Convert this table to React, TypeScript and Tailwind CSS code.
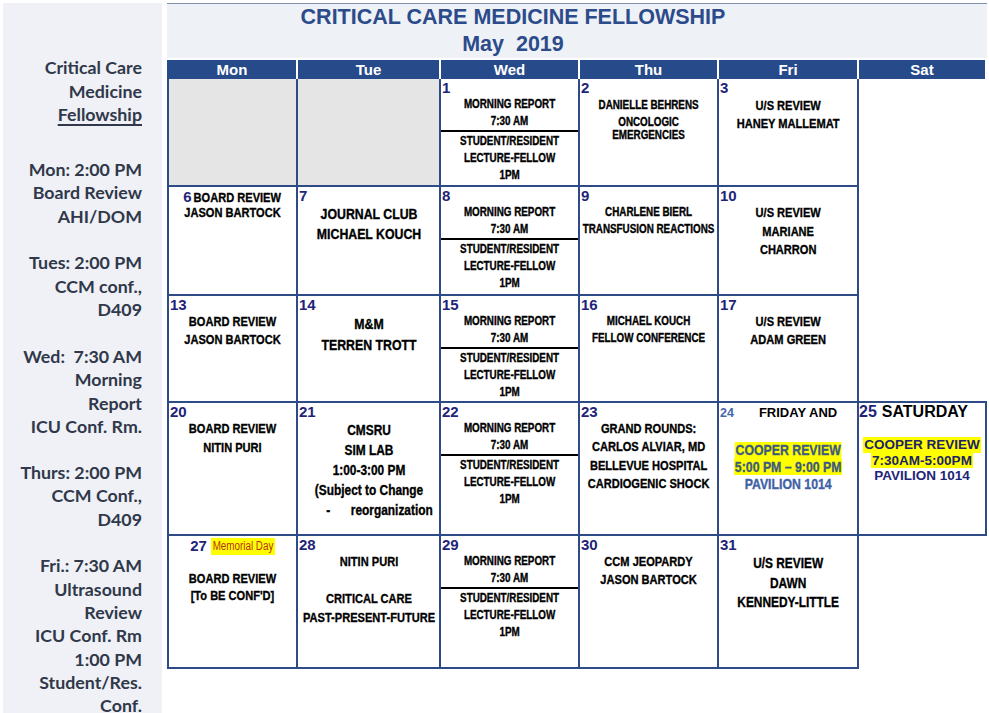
import React from "react";

const ARI = "font-['Liberation_Sans',Arial,sans-serif]";
const NAR =
  "font-['Liberation_Sans_Narrow','Arial_Narrow','Liberation_Sans',Arial,sans-serif] font-bold text-black [-webkit-text-stroke:0.35px_currentColor]";

/* Narrow block: Arial-metric bold text squeezed to Arial Narrow width */
function NB({
  className = "",
  children,
}: {
  className?: string;
  children?: React.ReactNode;
}) {
  return (
    <div
      className={`w-[122%] shrink-0 scale-x-[0.82] text-center whitespace-nowrap ${NAR} ${className}`}
    >
      {children}
    </div>
  );
}

function Num({ n }: { n: number }) {
  return (
    <div
      className={`self-stretch text-left pl-px mt-px h-[16px] leading-[16px] text-[15px] font-bold text-[#1e2478] ${ARI}`}
    >
      {n}
    </div>
  );
}

function Cell({
  children,
  cls = "border-r-2 border-b-2",
  bg = "bg-white",
}: {
  children?: React.ReactNode;
  cls?: string;
  bg?: string;
}) {
  return (
    <div
      className={`${cls} ${bg} border-[#2e4b87] flex flex-col items-center text-center overflow-hidden`}
    >
      {children}
    </div>
  );
}

function Wed({ n }: { n: number }) {
  return (
    <Cell>
      <Num n={n} />
      <NB className="text-[12px] leading-[17px]">
        MORNING REPORT
        <br />
        7:30 AM
      </NB>
      <div className="self-stretch h-[2px] bg-black" />
      <NB className="pt-px text-[12px] leading-[17px]">
        STUDENT/RESIDENT
        <br />
        LECTURE-FELLOW
        <br />
        1PM
      </NB>
    </Cell>
  );
}

const sidebar: { mt: string; lines: React.ReactNode[] }[] = [
  {
    mt: "mt-0",
    lines: [
      "Critical Care",
      "Medicine",
      <span className="underline underline-offset-[3px] decoration-[1.5px]">
        Fellowship
      </span>,
    ],
  },
  { mt: "mt-[31.7px]", lines: ["Mon: 2:00 PM", "Board Review", "AHI/DOM"] },
  { mt: "mt-[23.6px]", lines: ["Tues: 2:00 PM", "CCM conf.,", "D409"] },
  {
    mt: "mt-[23.6px]",
    lines: ["Wed:  7:30 AM", "Morning", "Report", "ICU Conf. Rm."],
  },
  { mt: "mt-[22.8px]", lines: ["Thurs: 2:00 PM", "CCM Conf.,", "D409"] },
  {
    mt: "mt-[23.6px]",
    lines: [
      "Fri.: 7:30 AM",
      "Ultrasound",
      "Review",
      "ICU Conf. Rm",
      "1:00 PM",
      "Student/Res.",
      "Conf.",
    ],
  },
];

export default function App() {
  return (
    <div className="w-[989px] h-[713px] bg-white overflow-hidden flex">
      {/* Sidebar */}
      <aside className="ml-[3px] mt-[3px] w-[159px] h-[710px] bg-[#eff1f6] pt-[53.4px] pr-[20px] text-right shrink-0">
        {sidebar.map((g, i) => (
          <div key={i} className={g.mt}>
            {g.lines.map((l, j) => (
              <div
                key={j}
                className="font-['Lato',sans-serif] font-bold text-[17.8px] leading-[23.3px] text-[#30384a] whitespace-pre"
              >
                {l}
              </div>
            ))}
          </div>
        ))}
      </aside>

      {/* Calendar */}
      <main className="ml-[5px] mt-[3px] w-[820px] shrink-0">
        <div className="border-t border-[#8391b0] bg-[#eef1f6] h-[55px]">
          <div
            className={`w-[692px] text-center font-bold text-[#2c4b8a] ${ARI}`}
          >
            <div className="text-[21.5px] leading-[26px]">
              CRITICAL CARE MEDICINE FELLOWSHIP
            </div>
            <div className="text-[21.5px] leading-[28px] whitespace-pre">
              May  2019
            </div>
          </div>
        </div>
        <div className="h-[2px]" />
        <div
          className={`grid grid-cols-[131px_143px_139px_139px_140px_126px] h-[19px] ${ARI} text-white font-bold text-[15px] leading-[19px]`}
        >
          {["Mon", "Tue", "Wed", "Thu", "Fri", "Sat"].map((d, i) => (
            <div
              key={d}
              className={`bg-[#274a8b] text-center ${
                i < 5 ? "border-r-2 border-white" : ""
              } ${i === 0 ? "pl-px" : ""}`}
            >
              {d}
            </div>
          ))}
        </div>

        <div className="grid grid-cols-[131px_143px_139px_139px_140px_128px] grid-rows-[108px_109px_107px_133px_133px]">
          {/* Row 1 */}
          <Cell cls="border-l-2 border-r-2 border-b-2" bg="bg-[#e5e5e5]" />
          <Cell bg="bg-[#e5e5e5]" />
          <Wed n={1} />
          <Cell>
            <Num n={2} />
            <NB className="text-[12px] leading-[18.5px]">DANIELLE BEHRENS</NB>
            <NB className="mt-px text-[12px] leading-[13.5px]">
              ONCOLOGIC
              <br />
              EMERGENCIES
            </NB>
          </Cell>
          <Cell>
            <Num n={3} />
            <NB className="mt-px text-[13.5px] leading-[17.5px]">
              U/S REVIEW
              <br />
              HANEY MALLEMAT
            </NB>
          </Cell>
          <Cell cls="" />

          {/* Row 2 */}
          <Cell cls="border-l-2 border-r-2 border-b-2">
            <div className="mt-px h-[17px] leading-[17px] flex items-baseline justify-center">
              <span
                className={`text-[15px] font-bold text-[#1e2478] ${ARI}`}
              >
                6
              </span>
              <span className="ml-[2px] w-[88px] flex justify-center">
                <span
                  className={`${NAR} shrink-0 scale-x-[0.82] whitespace-nowrap text-[13.5px]`}
                >
                  BOARD REVIEW
                </span>
              </span>
            </div>
            <NB className="text-[13.5px] leading-[16px]">JASON BARTOCK</NB>
          </Cell>
          <Cell>
            <Num n={7} />
            <NB className="text-[15px] leading-[20px]">
              JOURNAL CLUB
              <br />
              MICHAEL KOUCH
            </NB>
          </Cell>
          <Wed n={8} />
          <Cell>
            <Num n={9} />
            <NB className="text-[12px] leading-[17px]">
              CHARLENE BIERL
              <br />
              TRANSFUSION REACTIONS
            </NB>
          </Cell>
          <Cell>
            <Num n={10} />
            <NB className="text-[13.5px] leading-[18.7px]">
              U/S REVIEW
              <br />
              MARIANE
              <br />
              CHARRON
            </NB>
          </Cell>
          <Cell cls="" />

          {/* Row 3 */}
          <Cell cls="border-l-2 border-r-2 border-b-2">
            <Num n={13} />
            <NB className="text-[13.5px] leading-[18px]">
              BOARD REVIEW
              <br />
              JASON BARTOCK
            </NB>
          </Cell>
          <Cell>
            <Num n={14} />
            <NB className="text-[15px] leading-[21px]">
              M&amp;M
              <br />
              TERREN TROTT
            </NB>
          </Cell>
          <Wed n={15} />
          <Cell>
            <Num n={16} />
            <NB className="text-[12px] leading-[17px]">
              MICHAEL KOUCH
              <br />
              FELLOW CONFERENCE
            </NB>
          </Cell>
          <Cell>
            <Num n={17} />
            <NB className="text-[13.5px] leading-[18.3px]">
              U/S REVIEW
              <br />
              ADAM GREEN
            </NB>
          </Cell>
          <Cell cls="border-b-2" />

          {/* Row 4 */}
          <Cell cls="border-l-2 border-r-2 border-b-2">
            <Num n={20} />
            <NB className="text-[13.5px] leading-[18.5px]">
              BOARD REVIEW
              <br />
              NITIN PURI
            </NB>
          </Cell>
          <Cell>
            <Num n={21} />
            <NB className="text-[14.5px] leading-[20px]">
              CMSRU
              <br />
              SIM LAB
              <br />
              1:00-3:00 PM
              <br />
              (Subject to Change
            </NB>
            <NB className="text-left pl-[34px] text-[14.5px] leading-[20px]">
              <span>-</span>
              <span className="ml-[25px]">reorganization</span>
            </NB>
          </Cell>
          <Wed n={22} />
          <Cell>
            <Num n={23} />
            <NB className="text-[13.5px] leading-[18.3px]">
              GRAND ROUNDS:
              <br />
              CARLOS ALVIAR, MD
              <br />
              BELLEVUE HOSPITAL
              <br />
              CARDIOGENIC SHOCK
            </NB>
          </Cell>
          <Cell>
            <div
              className={`self-stretch mt-px h-[18px] leading-[18px] flex items-baseline font-bold ${ARI}`}
            >
              <span className="pl-px text-[12.5px] text-[#4466aa]">24</span>
              <span className="ml-[25px] text-[13px] text-black">
                FRIDAY AND
              </span>
            </div>
            <NB className="mt-[20px] text-[15px] leading-[16.5px] flex flex-col items-center">
              <span className="bg-[#ffff00] text-[#3d5a80] px-px">
                COOPER REVIEW
              </span>
              <span className="bg-[#ffff00] text-[#3d5a80] px-px">
                5:00 PM – 9:00 PM
              </span>
              <span className="text-[#3f62a6] leading-[18px]">
                PAVILION 1014
              </span>
            </NB>
          </Cell>
          <Cell cls="border-r-2 border-b-2">
            <div
              className={`self-stretch h-[18px] leading-[18px] flex items-baseline font-bold text-[16px] ${ARI}`}
            >
              <span className="text-[#1e2478]">25</span>
              <span className="ml-[5px] text-black">SATURDAY</span>
            </div>
            <div
              className={`mt-[16.2px] flex flex-col items-center font-bold text-[13.5px] leading-[15.5px] whitespace-nowrap ${ARI}`}
            >
              <span className="bg-[#ffff00] text-[#1d2366] px-[1.5px]">
                COOPER REVIEW
              </span>
              <span className="bg-[#ffff00] text-[#1d2366] px-[1.5px]">
                7:30AM-5:00PM
              </span>
              <span className="text-[#1e2478]">PAVILION 1014</span>
            </div>
          </Cell>

          {/* Row 5 */}
          <Cell cls="border-l-2 border-r-2 border-b-2">
            <div className="h-[20px] leading-[20px] flex items-center justify-center">
              <span
                className={`text-[15px] font-bold text-[#1e2478] ${ARI}`}
              >
                27
              </span>
              <span className="ml-[4px] w-[64px] h-[17px] bg-[#ffff00] flex justify-center items-center">
                <span
                  className={`shrink-0 scale-x-[0.82] whitespace-nowrap leading-[17px] text-[12px] text-[#b8301c] ${ARI}`}
                >
                  Memorial Day
                </span>
              </span>
            </div>
            <NB className="mt-[13.5px] text-[13.5px] leading-[17px]">
              BOARD REVIEW
              <br />
              [To BE CONF&apos;D]
            </NB>
          </Cell>
          <Cell>
            <Num n={28} />
            <NB className="text-[13.5px] leading-[18.5px]">
              NITIN PURI
              <br />
              &nbsp;
              <br />
              CRITICAL CARE
              <br />
              PAST-PRESENT-FUTURE
            </NB>
          </Cell>
          <Wed n={29} />
          <Cell>
            <Num n={30} />
            <NB className="text-[13.5px] leading-[18px]">
              CCM JEOPARDY
              <br />
              JASON BARTOCK
            </NB>
          </Cell>
          <Cell>
            <Num n={31} />
            <NB className="mt-px text-[14.5px] leading-[19.7px]">
              U/S REVIEW
              <br />
              DAWN
              <br />
              KENNEDY-LITTLE
            </NB>
          </Cell>
          <Cell cls="" />
        </div>
      </main>
    </div>
  );
}
